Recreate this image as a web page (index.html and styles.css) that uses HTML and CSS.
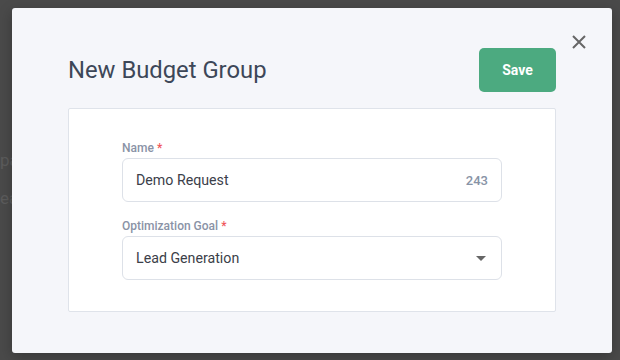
FILE: index.html
```html
<!DOCTYPE html>
<html lang="en">
<head>
<meta charset="utf-8">
<title>New Budget Group</title>
<link rel="stylesheet" href="styles.css">
</head>
<body>
<div class="page">
  <div class="page-line">pace</div>
  <div class="page-line">ead</div>
</div>
<div class="modal">
  <button class="close" aria-label="Close">
    <svg width="14" height="14" viewBox="0 0 14 14"><path d="M1 1L13 13M13 1L1 13" stroke="#666" stroke-width="2" fill="none"/></svg>
  </button>
  <div class="modal-header">
    <h1 class="title">New Budget Group</h1>
    <button class="save">Save</button>
  </div>
  <div class="card">
    <div class="field">
      <label class="label">Name<span class="req">*</span></label>
      <div class="input">
        <span class="value">Demo Request</span>
        <span class="count">243</span>
      </div>
    </div>
    <div class="field">
      <label class="label">Optimization Goal<span class="req">*</span></label>
      <div class="input">
        <span class="value">Lead Generation</span>
        <svg class="caret" width="10" height="5" viewBox="0 0 10 5"><path d="M0 0H10L5 5Z" fill="#666"/></svg>
      </div>
    </div>
  </div>
</div>
</body>
</html>
```

FILE: styles.css
```css
html, body {
  margin: 0;
  padding: 0;
}
body {
  width: 620px;
  height: 360px;
  background: #4a4a4a;
  font-family: Roboto, "Noto Sans", sans-serif;
  overflow: hidden;
  position: relative;
}
.page {
  display: flex;
  flex-direction: column;
  padding-top: 150px;
  gap: 18px;
  color: #5c5c5c;
  font-size: 17px;
}
.modal {
  position: absolute;
  left: 12px;
  top: 8px;
  width: 600px;
  height: 345px;
  box-sizing: border-box;
  background: #f5f6fa;
  border-radius: 3px;
  padding: 40px 56px;
  box-shadow: 0 4px 14px rgba(0,0,0,0.25);
}
.close {
  position: absolute;
  right: 26px;
  top: 27px;
  width: 14px;
  height: 14px;
  padding: 0;
  border: 0;
  background: none;
  display: flex;
}
.modal-header {
  display: flex;
  justify-content: space-between;
  align-items: center;
  height: 44px;
  margin-bottom: 16px;
}
.title {
  margin: 0;
  font-size: 23.8px;
  font-weight: 400;
  color: #3d4758;
}
.save {
  height: 44px;
  width: 77px;
  border: 0;
  border-radius: 5px;
  background: #4caa80;
  color: #fff;
  font-family: Roboto, sans-serif;
  font-weight: 700;
  font-size: 14px;
  padding: 0;
}
.card {
  background: #fff;
  border: 1px solid #dfe3ea;
  border-radius: 2px;
  padding: 31px 53px;
  display: flex;
  flex-direction: column;
  gap: 16px;
}
.field {
  display: flex;
  flex-direction: column;
}
.label {
  font-size: 12px;
  line-height: 16px;
  font-weight: 500;
  color: #8a93a6;
  margin-bottom: 2px;
}
.req {
  color: #f0575c;
  margin-left: 3px;
}
.input {
  height: 44px;
  box-sizing: border-box;
  border: 1px solid #dde1e8;
  border-radius: 6px;
  display: flex;
  align-items: center;
  justify-content: space-between;
  padding: 0 13px;
}
.value {
  font-size: 14.2px;
  color: #3b4049;
}
.count {
  font-size: 13px;
  font-weight: 500;
  color: #8893a6;
}
.caret {
  margin-right: 2px;
}
```
